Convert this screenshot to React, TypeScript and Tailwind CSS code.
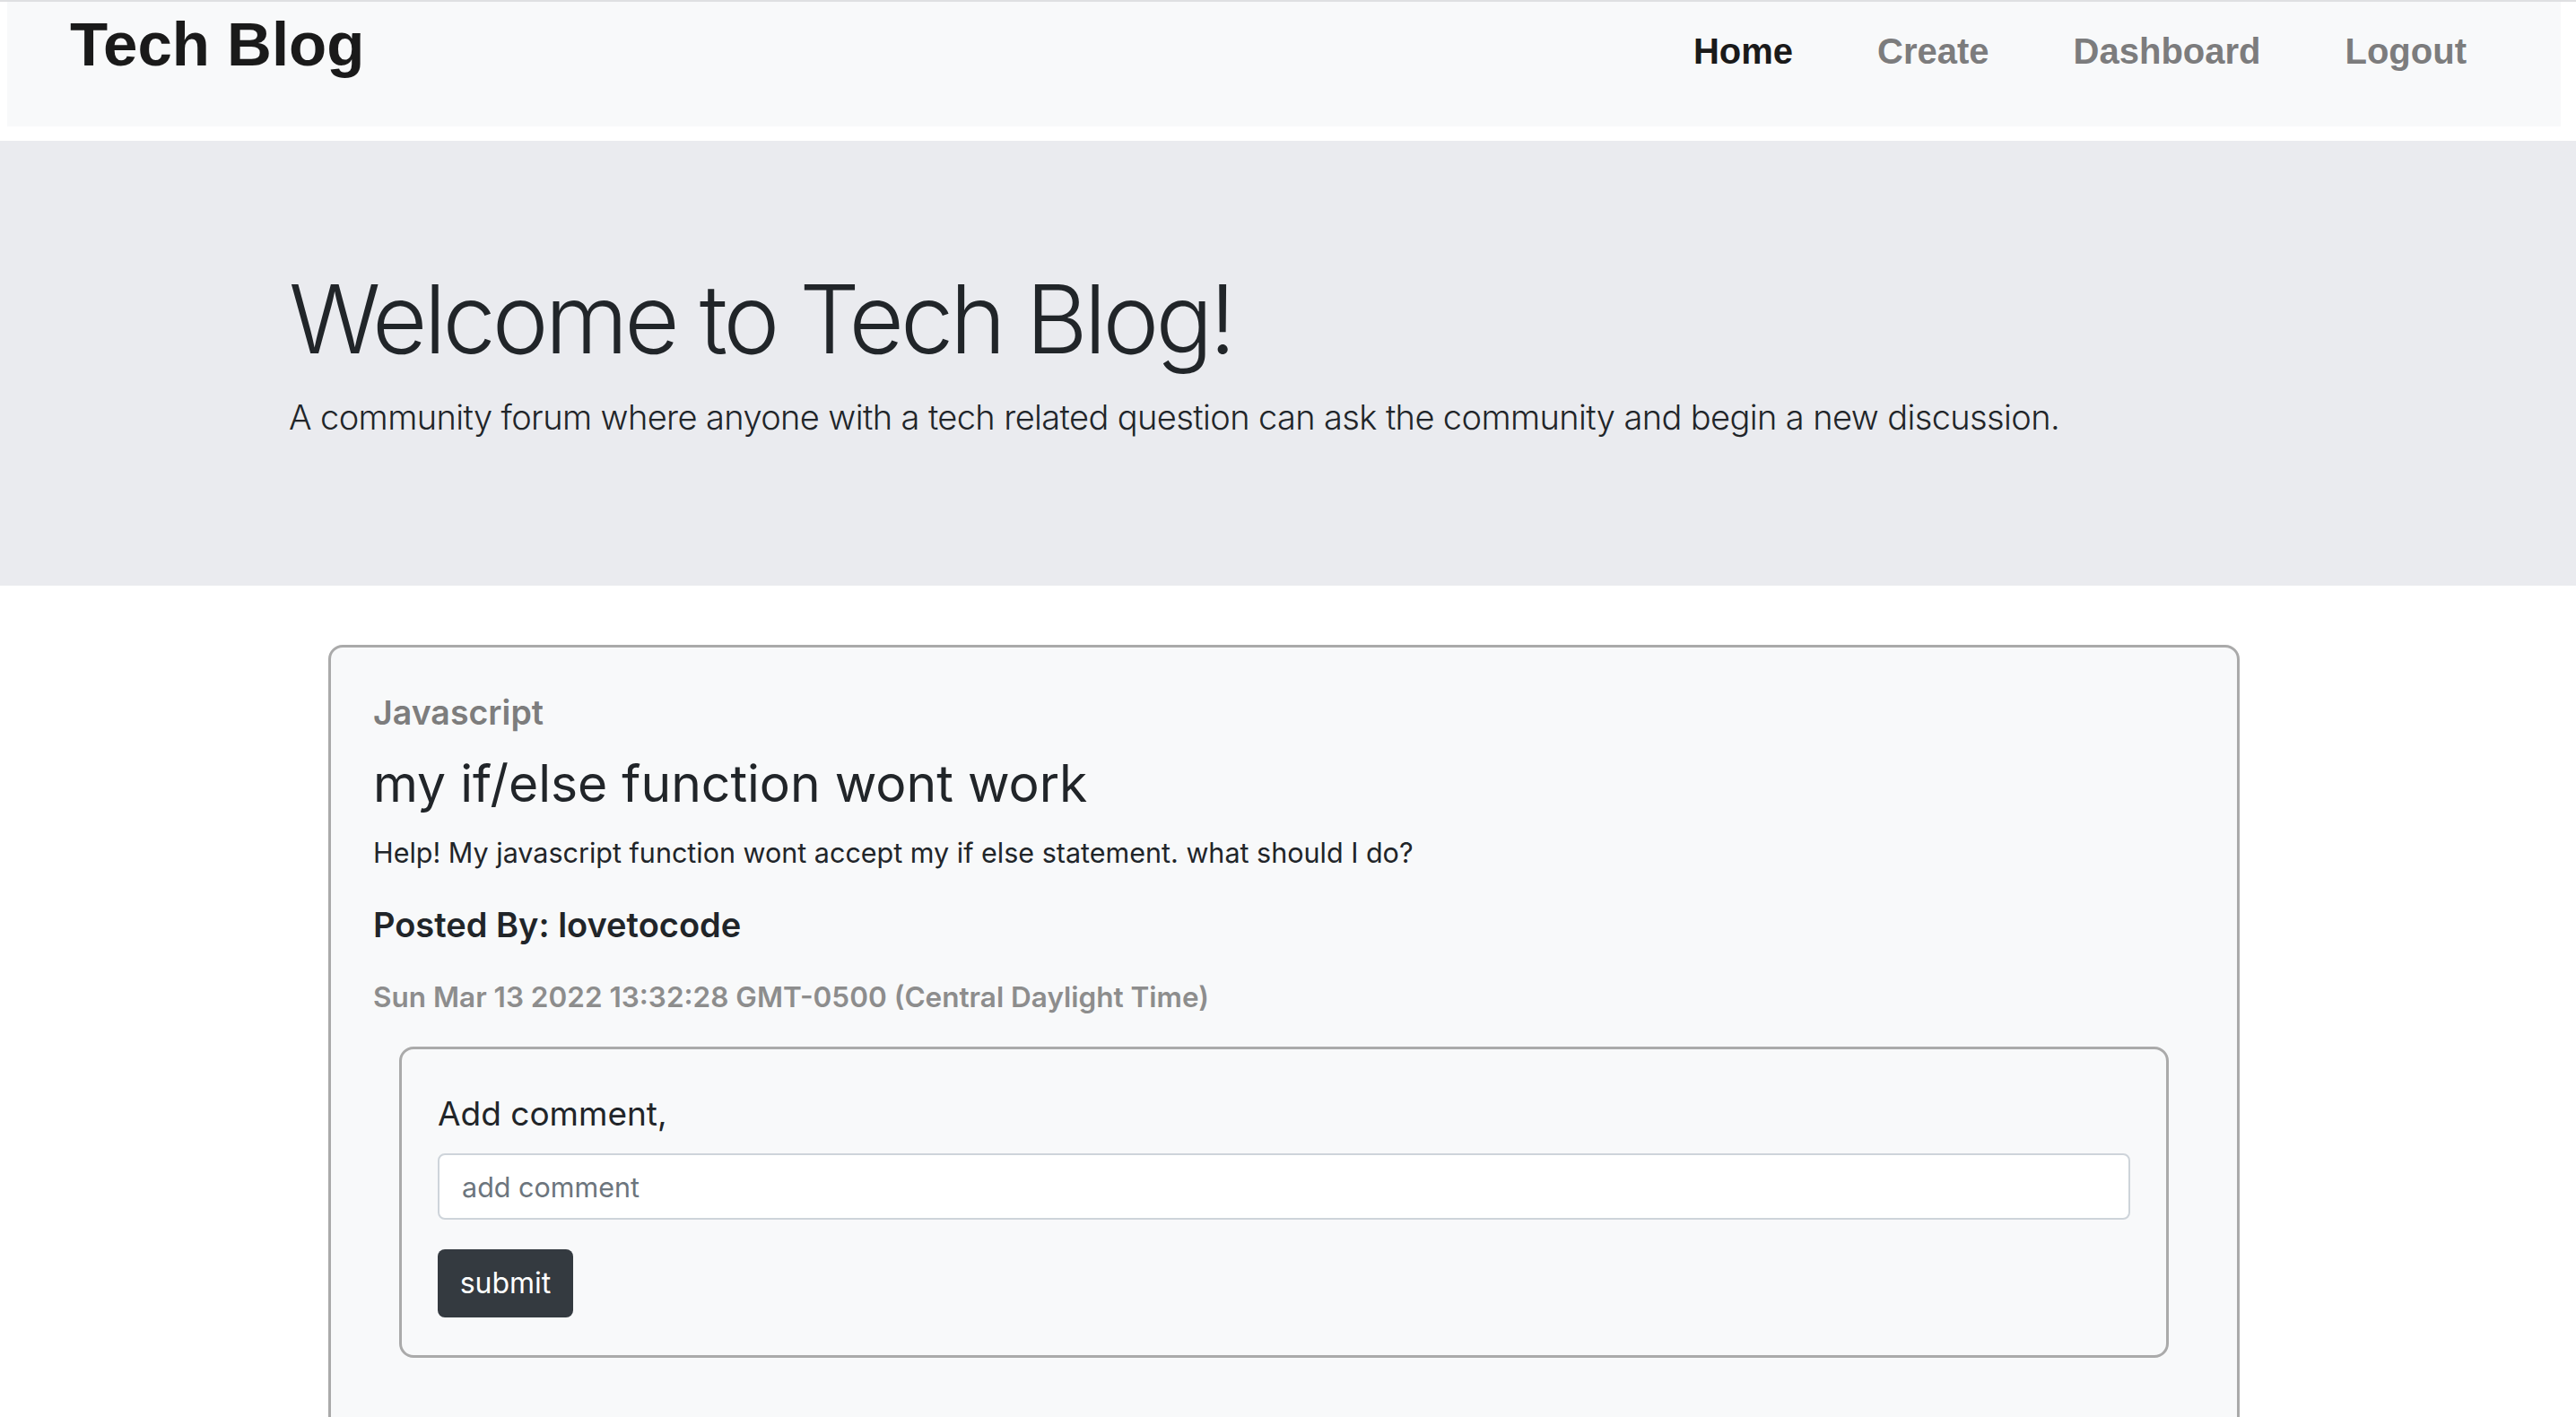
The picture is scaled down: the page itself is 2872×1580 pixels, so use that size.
import React from "react";

const sf = { fontFamily: "Inter, 'Noto Sans', 'Liberation Sans', sans-serif" };

export default function App() {
  return (
    <div className="min-h-[1580px] bg-white text-[#212529]" style={sf}>
      <div className="h-[2px] bg-[#dfe0e2]" />
      <nav className="ml-[8px] mr-[17px] h-[139px] bg-[#f8f9fa] flex items-start justify-between pl-[70px] pr-[105px] font-['Liberation_Sans',Arial,sans-serif]">
        <div className="mt-[13px] text-[69px] leading-none font-bold text-[#1a1a1a]">Tech Blog</div>
        <ul className="mt-[35px] flex gap-[94px] text-[40px] leading-none font-bold">
          <li className="text-[#1a1a1a]">Home</li>
          <li className="text-[#7c7c7d]">Create</li>
          <li className="text-[#7c7c7d]">Dashboard</li>
          <li className="text-[#7c7c7d]">Logout</li>
        </ul>
      </nav>
      <section className="mt-[16px] bg-[#eaebef] pl-[322px] pt-[135px] pb-[159px]">
        <h1 className="text-[106px] leading-[1.2] font-light tracking-[-0.037em]">Welcome to Tech Blog!</h1>
        <p className="mt-[18px] text-[38px] leading-[1.5] font-light tracking-[-0.016em]">
          A community forum where anyone with a tech related question can ask the community and begin a new discussion.
        </p>
      </section>
      <div className="pt-[66px] pl-[366px] pr-[375px]">
        <div className="border-[3px] border-[#aaaaaa] rounded-[16px] bg-[#f8f9fa] px-[47px] pt-[50px] pb-[120px]">
          <div className="text-[37.5px] leading-[1.2] font-semibold text-[#7d7d7d]">Javascript</div>
          <h3 className="mt-[23px] text-[57px] leading-[1.2] font-normal">my if/else function wont work</h3>
          <p className="mt-[19px] text-[30.5px] leading-[1.5]">
            Help! My javascript function wont accept my if else statement. what should I do?
          </p>
          <h5 className="mt-[36px] text-[38px] leading-[1.2] font-semibold">Posted By: lovetocode</h5>
          <p className="mt-[33px] text-[31.5px] leading-[1.5] font-semibold text-[#8d8d8d]">
            Sun Mar 13 2022 13:32:28 GMT-0500 (Central Daylight Time)
          </p>
          <div className="mt-[31.5px] mx-[29px] border-[3px] border-[#aaaaaa] rounded-[16px] px-[40px] pt-[50px] pb-[42px]">
            <div className="text-[37px] leading-[1.2]">Add comment,</div>
            <input
              className="mt-[22px] block w-full h-[74px] border-2 border-[#ced4da] rounded-[8px] bg-white pl-[25px] text-[30.5px] placeholder:text-[#6c757d] outline-none"
              placeholder="add comment"
            />
            <button className="mt-[33px] block w-[151px] h-[76px] rounded-[8px] bg-[#343a40] text-white text-[32px]">
              submit
            </button>
          </div>
        </div>
      </div>
    </div>
  );
}
